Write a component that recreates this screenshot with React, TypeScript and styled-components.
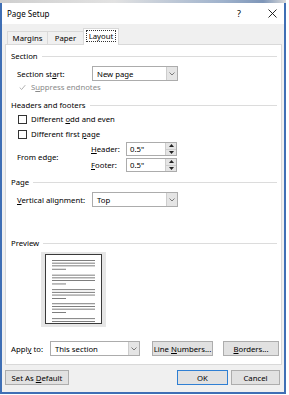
import React from 'react';
import styled, { createGlobalStyle } from 'styled-components';

const Global = createGlobalStyle`
  html, body { margin: 0; padding: 0; background: #ffffff; }
  body { font-family: "Noto Sans", "Open Sans", sans-serif; font-size: 7.75px; color: #000; }
  * { box-sizing: border-box; }
`;

const Screen = styled.div`
  width: 289px;
  height: 395px;
  overflow: hidden;
  background: #fff;
  display: flex;
  flex-direction: column;
`;

const BackStrip = styled.div`
  height: 3px;
  flex: none;
  width: 286px;
  background: linear-gradient(90deg, #cfcfcf 0%, #e2e2e2 40%, #9fb2cc 78%, #7e96b8 92%, #d9d9d9 100%);
`;

const Dialog = styled.div`
  width: 286px;
  height: 391px;
  flex: none;
  border-left: 2px solid #3f6fb5;
  border-right: 2px solid #3f6fb5;
  border-bottom: 2px solid #3f6fb5;
  display: flex;
  flex-direction: column;
  background: #f0f0f0;
`;

const TitleBar = styled.div`
  height: 21px;
  flex: none;
  background: #fff;
  display: flex;
  align-items: center;
  padding-left: 5px;
`;

const Title = styled.span`
  flex: 1;
  font-size: 8px;
  padding-bottom: 1px;
`;

const TitleButton = styled.span<{ $w: number; $mr?: number }>`
  width: ${p => p.$w}px;
  margin-right: ${p => p.$mr ?? 0}px;
  display: flex;
  align-items: center;
  justify-content: center;
  font-size: 9px;
  padding-bottom: 1px;
`;

const Body = styled.div`
  flex: 1;
  display: flex;
  flex-direction: column;
  padding: 4px 2px 0 3px;
`;

const TabRow = styled.div`
  height: 17px;
  display: flex;
  align-items: flex-end;
  padding-left: 2px;
  margin-bottom: -1px;
  position: relative;
  z-index: 1;
`;

const Tab = styled.div<{ $w: number; $active?: boolean }>`
  width: ${p => p.$w}px;
  height: ${p => (p.$active ? 17 : 14)}px;
  display: flex;
  align-items: center;
  justify-content: center;
  background: ${p => (p.$active ? '#fff' : '#f0f0f0')};
  border: 1px solid #d9d9d9;
  border-bottom: ${p => (p.$active ? 'none' : '1px solid #d9d9d9')};
  margin-right: ${p => (p.$active ? 0 : -1)}px;
  padding-bottom: ${p => (p.$active ? 2 : 0)}px;
`;

const FocusLabel = styled.span`
  outline: 1px dotted #333;
  padding: 0 2px;
  line-height: 10px;
`;

const Panel = styled.div`
  height: 321px;
  background: #fff;
  border: 1px solid #d9d9d9;
  padding: 6px 4px 0 5px;
  display: flex;
  flex-direction: column;
`;

const Heading = styled.div<{ $mt: number }>`
  height: 10px;
  margin-top: ${p => p.$mt}px;
  display: flex;
  align-items: center;
  gap: 4px;
  &::after {
    content: '';
    flex: 1;
    height: 1px;
    background: #dcdcdc;
  }
`;

const Row = styled.div<{ $mt: number; $h?: number; $pl?: number }>`
  margin-top: ${p => p.$mt}px;
  height: ${p => p.$h ?? 15}px;
  padding-left: ${p => p.$pl ?? 6}px;
  display: flex;
  align-items: center;
`;

const Label = styled.span<{ $w: number; $muted?: boolean }>`
  width: ${p => p.$w}px;
  flex: none;
  white-space: nowrap;
  color: ${p => (p.$muted ? '#8a8a8a' : '#000')};
`;

const Key = styled.u`
  text-decoration: underline;
  text-underline-offset: 1px;
`;

const SelectBox = styled.div<{ $w: number }>`
  width: ${p => p.$w}px;
  height: 15px;
  border: 1px solid #acacac;
  background: #fff;
  display: flex;
  flex: none;
`;

const SelectText = styled.span`
  flex: 1;
  display: flex;
  align-items: center;
  padding-left: 4px;
`;

const SelectArrow = styled.span`
  width: 11px;
  background: #e5e5e5;
  border-left: 1px solid #cdcdcd;
  display: flex;
  align-items: center;
  justify-content: center;
`;

const CheckBox = styled.span<{ $disabled?: boolean }>`
  width: 9px;
  height: 9px;
  flex: none;
  border: 1px solid ${p => (p.$disabled ? '#ffffff' : '#333')};
  background: #fff;
  margin-right: 4px;
  display: flex;
  align-items: center;
  justify-content: center;
`;

const EdgeGroup = styled.div`
  margin-top: 3px;
  padding-left: 6px;
  display: flex;
  align-items: center;
`;

const SpinColumn = styled.div`
  display: flex;
  flex-direction: column;
  gap: 2px;
`;

const SpinRow = styled.div`
  height: 14px;
  display: flex;
  align-items: center;
`;

const SpinBox = styled.div`
  width: 51px;
  height: 14px;
  border: 1px solid #acacac;
  display: flex;
  background: #fff;
`;

const SpinText = styled.span`
  flex: 1;
  display: flex;
  align-items: center;
  padding-left: 3px;
`;

const SpinButtons = styled.span`
  width: 11px;
  background: #e5e5e5;
  border-left: 1px solid #cdcdcd;
  display: flex;
  flex-direction: column;
`;

const SpinHalf = styled.span<{ $top?: boolean }>`
  flex: 1;
  display: flex;
  align-items: center;
  justify-content: center;
  border-bottom: ${p => (p.$top ? '1px solid #cdcdcd' : 'none')};
`;

const PreviewFrame = styled.div`
  margin-top: 4px;
  margin-left: 30px;
  width: 65px;
  height: 75px;
  background: #e6e6e6;
  padding: 2px 4px 3px;
  display: flex;
`;

const PreviewPage = styled.div`
  flex: 1;
  background: #fff;
  border: 1px solid #3a3a3a;
  display: flex;
`;

const ApplyRow = styled.div`
  margin-top: 14px;
  height: 15px;
  display: flex;
  align-items: center;
`;

const Button = styled.button<{ $w: number; $default?: boolean; $ml?: number }>`
  width: ${p => p.$w}px;
  height: 15px;
  flex: none;
  margin-left: ${p => p.$ml ?? 0}px;
  padding: 0;
  font: inherit;
  color: #000;
  background: #e1e1e1;
  border: 1px solid ${p => (p.$default ? '#2f7fd3' : '#adadad')};
  display: flex;
  align-items: center;
  justify-content: center;
  white-space: nowrap;
`;

const Footer = styled.div`
  flex: 1;
  display: flex;
  align-items: flex-start;
  padding: 5px 2px 0 0;
`;

const Spacer = styled.div`
  flex: 1;
`;

const Chevron = () => (
  <svg width="6" height="4" viewBox="0 0 6 4">
    <polyline points="0.5,0.5 3,3 5.5,0.5" fill="none" stroke="#6d6d6d" strokeWidth="0.9" />
  </svg>
);

const Tri = ({ up }: { up?: boolean }) => (
  <svg width="5" height="3" viewBox="0 0 5 3">
    <polygon points={up ? '0,3 2.5,0 5,3' : '0,0 2.5,3 5,0'} fill="#222" />
  </svg>
);

const CheckMark = () => (
  <svg width="8" height="7" viewBox="0 0 8 7">
    <polyline points="0.8,3.6 3,5.8 7.2,0.8" fill="none" stroke="#a8a8a8" strokeWidth="1" />
  </svg>
);

const CloseIcon = () => (
  <svg width="9" height="9" viewBox="0 0 9 9">
    <line x1="0.5" y1="0.5" x2="8.5" y2="8.5" stroke="#111" strokeWidth="0.9" />
    <line x1="8.5" y1="0.5" x2="0.5" y2="8.5" stroke="#111" strokeWidth="0.9" />
  </svg>
);

const PageLines = () => {
  const starts = [6, 20.7, 35.2, 49.3, 64.2];
  const lines: React.ReactElement[] = [];
  starts.forEach((s, i) => {
    const offs = i === 4 ? [0, 2.8] : [0, 2.7, 5.4];
    offs.forEach((o, j) => {
      lines.push(<rect key={`${i}-${j}`} x={6} y={s + o - 1} width={43} height={0.9} fill="#707070" />);
    });
    if (i < 4) lines.push(<rect key={`${i}-s`} x={6} y={s + 8.8 - 1} width={14} height={0.9} fill="#707070" />);
  });
  return (
    <svg width="55" height="68" viewBox="0 0 55 68">
      {lines}
    </svg>
  );
};

const Select = ({ w, text }: { w: number; text: string }) => (
  <SelectBox $w={w}>
    <SelectText>{text}</SelectText>
    <SelectArrow>
      <Chevron />
    </SelectArrow>
  </SelectBox>
);

const Spin = ({ value }: { value: string }) => (
  <SpinBox>
    <SpinText>{value}</SpinText>
    <SpinButtons>
      <SpinHalf $top>
        <Tri up />
      </SpinHalf>
      <SpinHalf>
        <Tri />
      </SpinHalf>
    </SpinButtons>
  </SpinBox>
);

export default function App() {
  return (
    <Screen>
      <Global />
      <BackStrip />
      <Dialog>
        <TitleBar>
          <Title>Page Setup</Title>
          <TitleButton $w={20} $mr={11}>?</TitleButton>
          <TitleButton $w={24}>
            <CloseIcon />
          </TitleButton>
        </TitleBar>
        <Body>
          <TabRow>
            <Tab $w={41}>Margins</Tab>
            <Tab $w={37}>Paper</Tab>
            <Tab $w={36} $active>
              <FocusLabel>Layout</FocusLabel>
            </Tab>
          </TabRow>
          <Panel>
            <Heading $mt={0}>Section</Heading>
            <Row $mt={5}>
              <Label $w={75}>
                Section st<Key>a</Key>rt:
              </Label>
              <Select w={86} text="New page" />
            </Row>
            <Row $mt={1} $h={10} $pl={7}>
              <CheckBox $disabled>
                <CheckMark />
              </CheckBox>
              <Label $w={120} $muted>
                S<Key>u</Key>ppress endnotes
              </Label>
            </Row>
            <Heading $mt={8}>Headers and footers</Heading>
            <Row $mt={4} $h={10} $pl={7}>
              <CheckBox />
              <Label $w={150}>
                Different <Key>o</Key>dd and even
              </Label>
            </Row>
            <Row $mt={5} $h={10} $pl={7}>
              <CheckBox />
              <Label $w={150}>
                Different first <Key>p</Key>age
              </Label>
            </Row>
            <EdgeGroup>
              <Label $w={74}>From edge:</Label>
              <SpinColumn>
                <SpinRow>
                  <Label $w={35}>
                    <Key>H</Key>eader:
                  </Label>
                  <Spin value={'0.5"'} />
                </SpinRow>
                <SpinRow>
                  <Label $w={35}>
                    <Key>F</Key>ooter:
                  </Label>
                  <Spin value={'0.5"'} />
                </SpinRow>
              </SpinColumn>
            </EdgeGroup>
            <Heading $mt={5}>Page</Heading>
            <Row $mt={5}>
              <Label $w={75}>
                <Key>V</Key>ertical alignment:
              </Label>
              <Select w={86} text="Top" />
            </Row>
            <Heading $mt={31}>Preview</Heading>
            <PreviewFrame>
              <PreviewPage>
                <PageLines />
              </PreviewPage>
            </PreviewFrame>
            <ApplyRow>
              <Label $w={39}>
                Appl<Key>y</Key> to:
              </Label>
              <Select w={90} text="This section" />
              <Button $w={61} $ml={12}>
                Line&nbsp;<Key>N</Key>umbers...
              </Button>
              <Button $w={56} $ml={10}>
                <Key>B</Key>orders...
              </Button>
            </ApplyRow>
          </Panel>
          <Footer>
            <Button $w={64}>
              Set As&nbsp;<Key>D</Key>efault
            </Button>
            <Spacer />
            <Button $w={51} $default>
              OK
            </Button>
            <Button $w={49} $ml={3}>
              Cancel
            </Button>
          </Footer>
        </Body>
      </Dialog>
    </Screen>
  );
}
